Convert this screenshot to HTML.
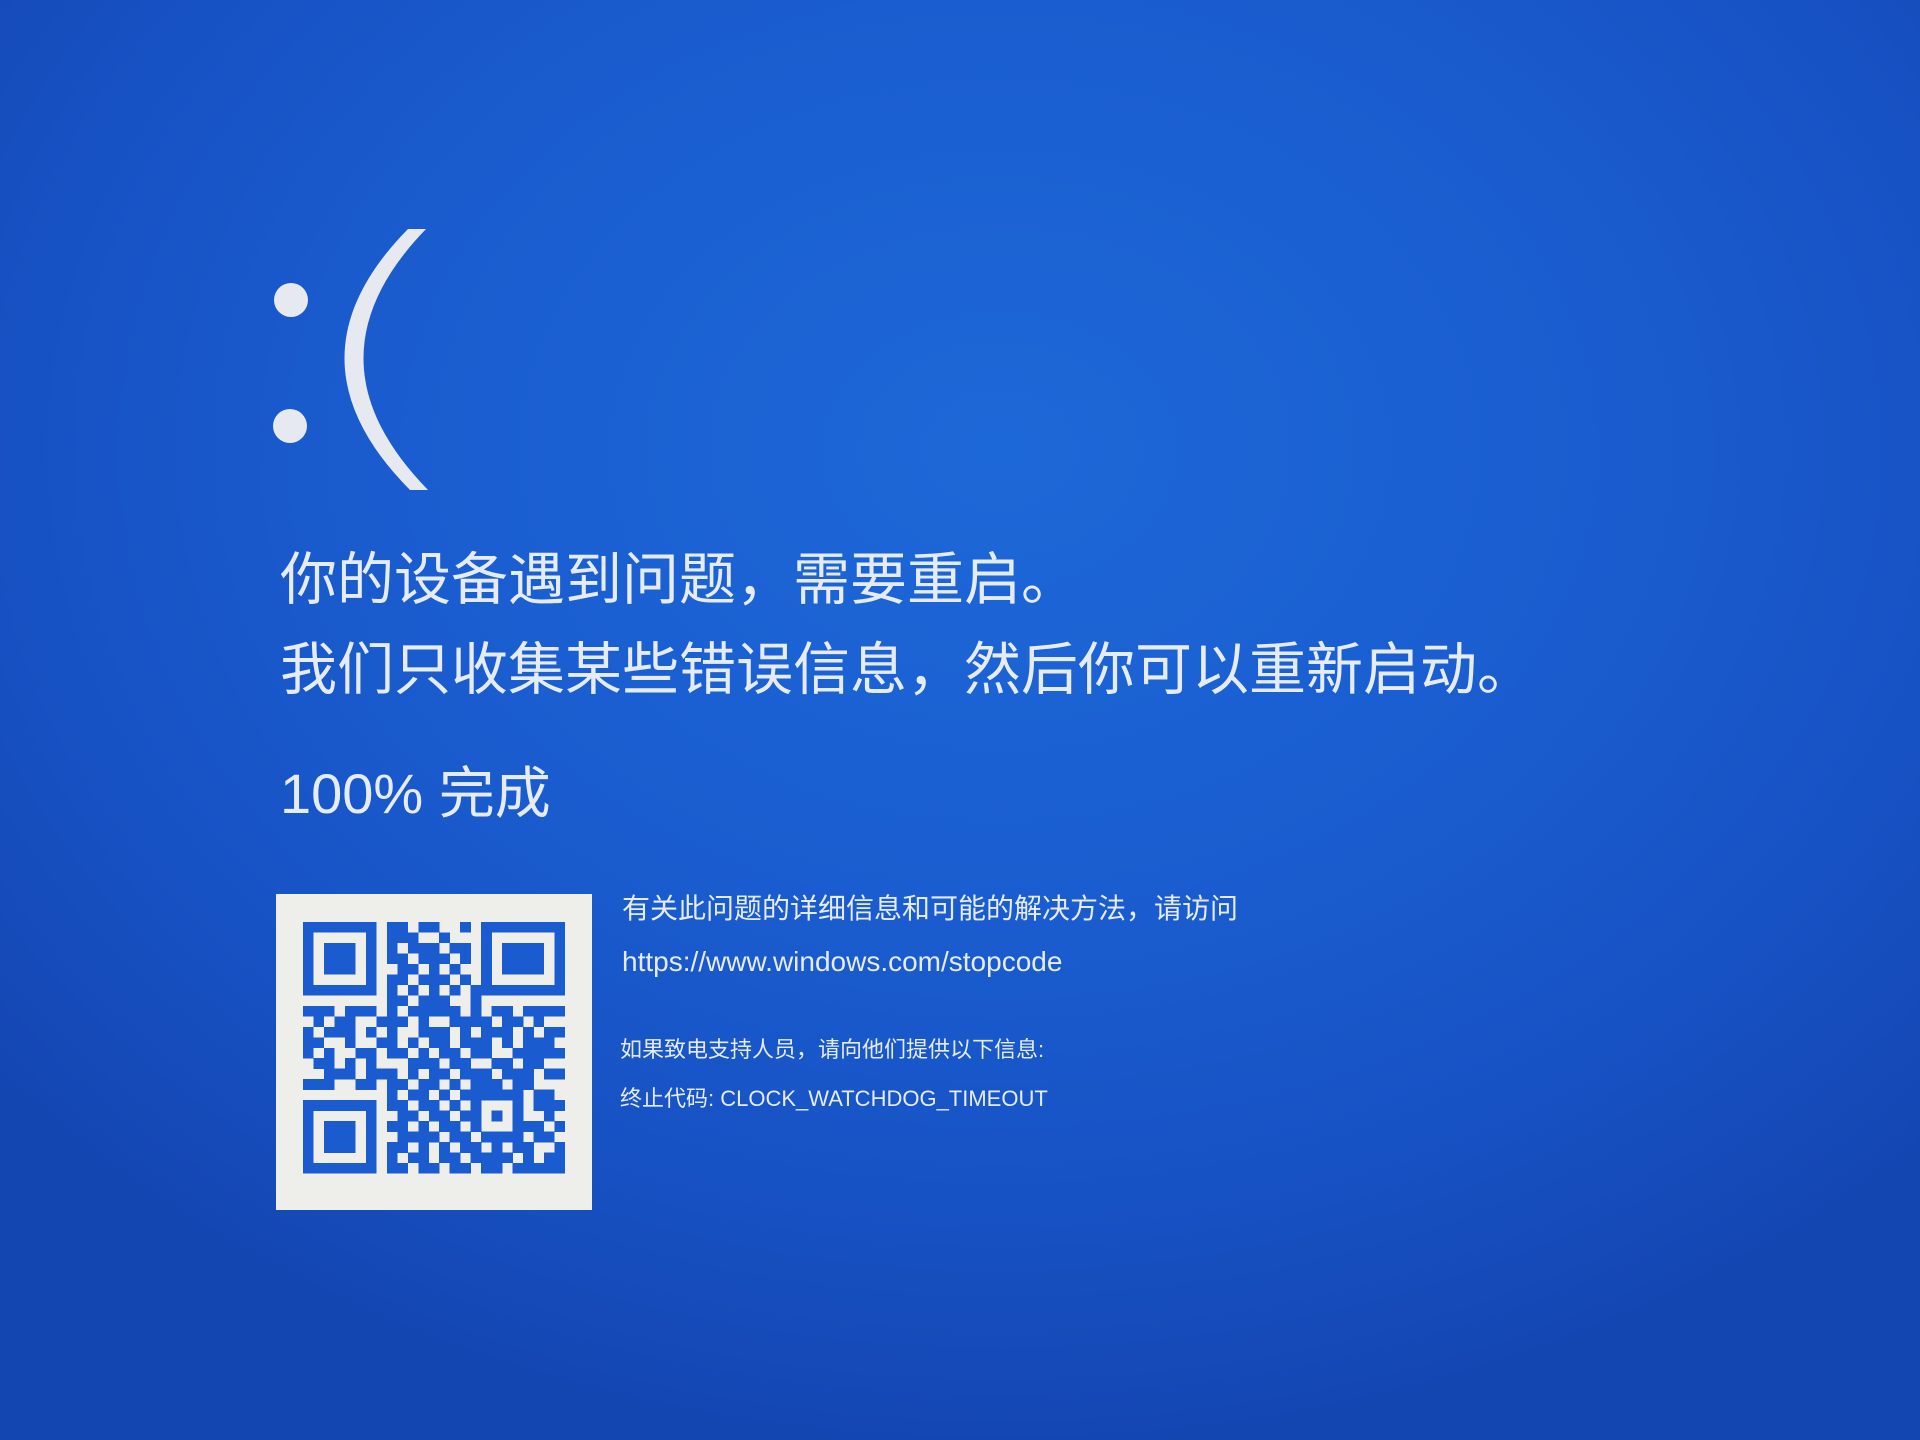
<!DOCTYPE html>
<html><head><meta charset="utf-8">
<style>
html,body{margin:0;padding:0}
body{width:1920px;height:1440px;overflow:hidden;position:relative;
background:radial-gradient(ellipse 1300px 1000px at 1000px 450px,#1d68d8 0%,#1a5dd0 45%,#1752c4 75%,#1446b2 100%);
font-family:"Liberation Sans","Noto Sans CJK SC",sans-serif;color:#e6ecf5}
.t{position:absolute;white-space:nowrap}
</style></head><body>
<svg style="position:absolute;left:0;top:0" width="600" height="600">
<circle cx="291" cy="300" r="17" fill="#e6eaf0"/>
<circle cx="290" cy="426" r="17" fill="#e6eaf0"/>
<path d="M408,229 Q280,359 410,490 L428,490 Q300,359 426,229 Z" fill="#e6eaf0"/>
</svg>
<div class="t" style="left:280px;top:550px;font-size:57px;line-height:60px">你的设备遇到问题，需要重启。</div>
<div class="t" style="left:280px;top:640px;font-size:57px;line-height:60px">我们只收集某些错误信息，然后你可以重新启动。</div>
<div class="t" style="left:280px;top:764px;font-size:56px;line-height:60px">100% 完成</div>
<div style="position:absolute;left:276px;top:894px;width:316px;height:316px;background:#eeeeea"></div>
<svg style="position:absolute;left:303px;top:922px" width="262" height="262" viewBox="0 0 25 25" shape-rendering="crispEdges">
<g fill="#1a5cd0" id="q"></g></svg>
<div class="t" style="left:622px;top:892px;font-size:28px;line-height:34px">有关此问题的详细信息和可能的解决方法，请访问</div>
<div class="t" style="left:622px;top:945px;font-size:28px;line-height:34px">https://www.windows.com/stopcode</div>
<div class="t" style="left:620px;top:1036px;font-size:22px;line-height:28px">如果致电支持人员，请向他们提供以下信息:</div>
<div class="t" style="left:620px;top:1085px;font-size:22px;line-height:28px">终止代码: CLOCK_WATCHDOG_TIMEOUT</div>
<script>
var rows=[
"1111111011011001011111111",
"1000001011100100010000001",
"1011101010111011010111101",
"1011101011011101010111101",
"1011101001101010010111101",
"1000001011011101010000001",
"1111111010101010111111111",
"0000000011011100100000000",
"1110111010111110101101111",
"0101100111010011110110100",
"1011101010011101011101011",
"1100100110101101110101110",
"1010011011010110110011111",
"0110101000111011001101100",
"0011101110101101110111011",
"1110011011011010111011000",
"0000000010110101111110110",
"1111111011011010100010111",
"1000001001101101101010010",
"1011101011010110100011101",
"1011101001111011011110110",
"1011101011010101101011001",
"1000001010110110111101011",
"1111111011011011011011111",
"0000000000000000000000000"];
var g=document.getElementById('q'),s='';
rows.forEach(function(r,y){for(var x=0;x<25;x++)if(r[x]=='1')s+='<rect x="'+x+'" y="'+y+'" width="1.02" height="1.02"/>';});
g.innerHTML=s;
</script>
</body></html>
